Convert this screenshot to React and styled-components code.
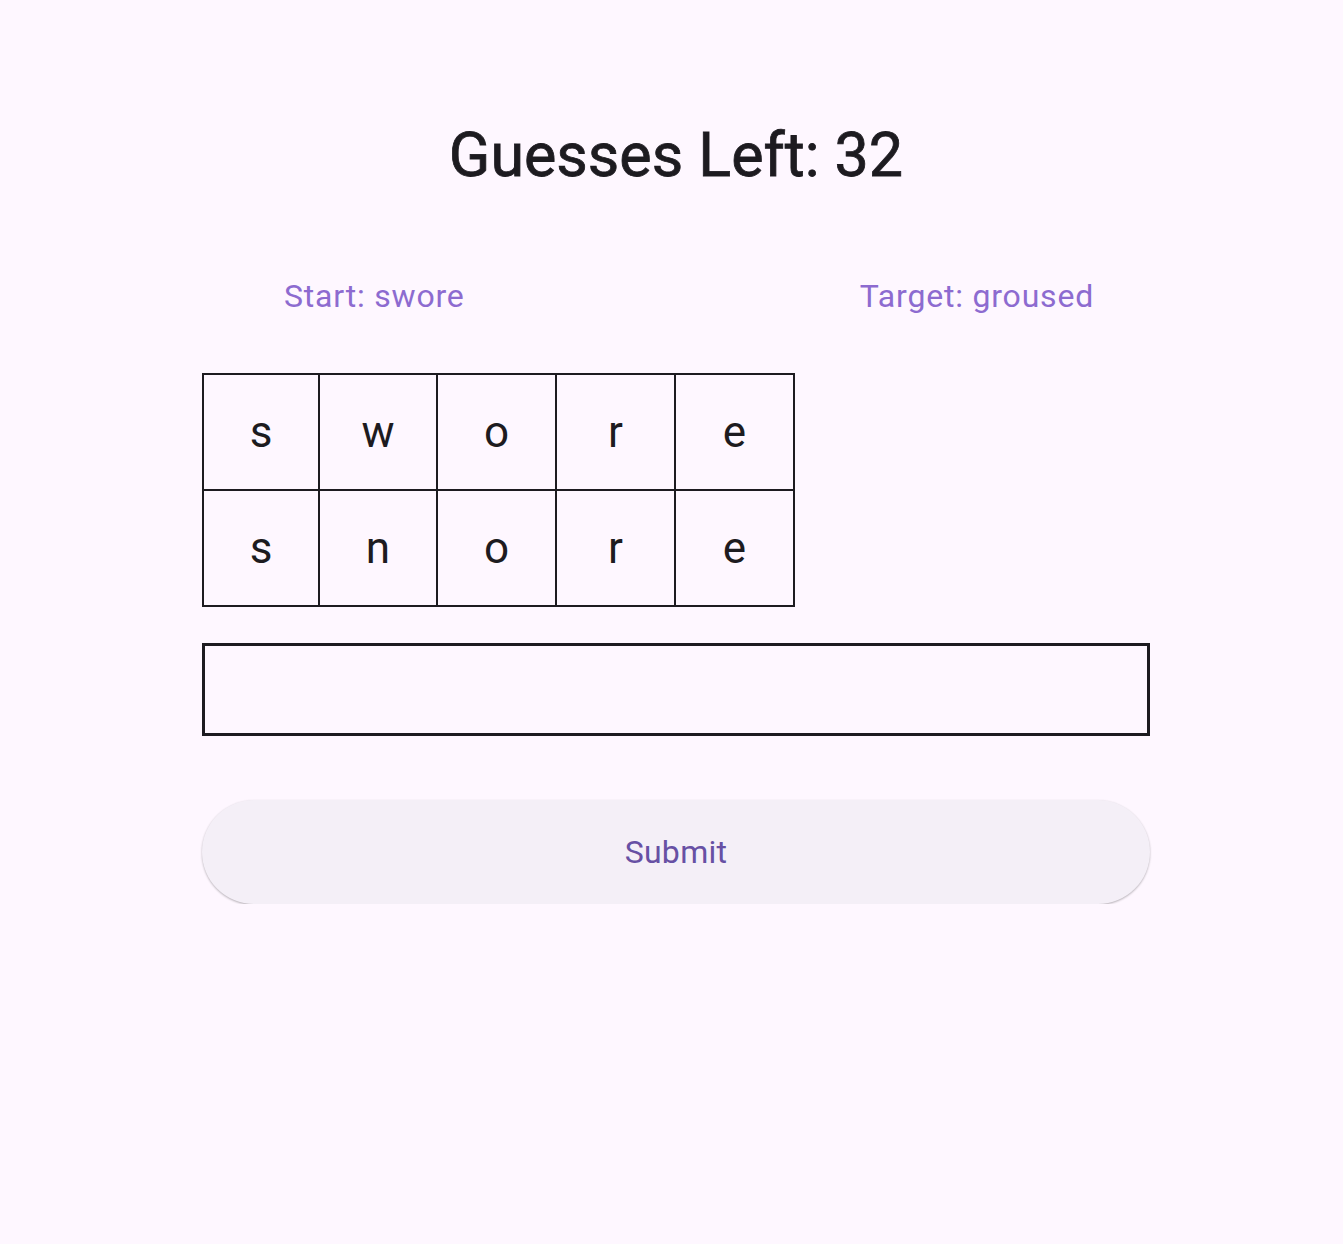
import React from "react";
import styled, { createGlobalStyle } from "styled-components";

const Global = createGlobalStyle`
  html, body { margin: 0; padding: 0; background: #fef7ff; }
  body { font-family: Roboto, "Liberation Sans", sans-serif; color: #1d1b20; }
`;

const Page = styled.main`
  width: 948px;
  margin-left: 202px;
  padding-top: 117px;
  display: flex;
  flex-direction: column;
`;

const Title = styled.h1`
  margin: 0;
  font-size: 61px;
  line-height: 77px;
  font-weight: 400;
  text-align: center;
  color: #1d1b20;
  -webkit-text-stroke: 0.8px #1d1b20;
`;

const Labels = styled.div`
  margin-top: 83px;
  display: flex;
  justify-content: space-between;
  padding: 0 56px 0 82px;
`;

const Label = styled.span`
  font-size: 32px;
  line-height: 38px;
  letter-spacing: 0.8px;
  color: #8d6bd0;
`;

const Grid = styled.div`
  margin-top: 58px;
  display: grid;
  grid-template-columns: 116px 118px 119px 119px 119px;
  grid-auto-rows: 116px;
  width: max-content;
  border-top: 2px solid #1d1b20;
  border-left: 2px solid #1d1b20;
`;

const Cell = styled.div`
  border-right: 2px solid #1d1b20;
  border-bottom: 2px solid #1d1b20;
  display: flex;
  align-items: center;
  justify-content: center;
  font-size: 44px;
  color: #1d1b20;
`;

const Input = styled.input`
  margin-top: 36px;
  box-sizing: border-box;
  width: 100%;
  height: 93px;
  border: 3px solid #1d1b20;
  background: transparent;
  font: inherit;
  font-size: 32px;
  padding: 0 24px;
  outline: none;
`;

const Button = styled.button`
  margin-top: 64px;
  height: 104px;
  width: 100%;
  border: none;
  border-radius: 52px;
  background: #f4eff7;
  box-shadow: 0 1px 2px rgba(0, 0, 0, 0.22), 0 1px 3px rgba(0, 0, 0, 0.08);
  font-family: Roboto, "Liberation Sans", sans-serif;
  font-size: 32px;
  font-weight: 400;
  letter-spacing: 0.3px;
  color: #6750a4;
  cursor: pointer;
`;

const rows = ["swore", "snore"];

export default function App() {
  return (
    <>
      <Global />
      <Page>
        <Title>Guesses Left: 32</Title>
        <Labels>
          <Label>Start: swore</Label>
          <Label>Target: groused</Label>
        </Labels>
        <Grid>
          {rows.map((w, r) =>
            w.split("").map((ch, i) => <Cell key={r + "-" + i}>{ch}</Cell>)
          )}
        </Grid>
        <Input type="text" />
        <Button>Submit</Button>
      </Page>
    </>
  );
}
